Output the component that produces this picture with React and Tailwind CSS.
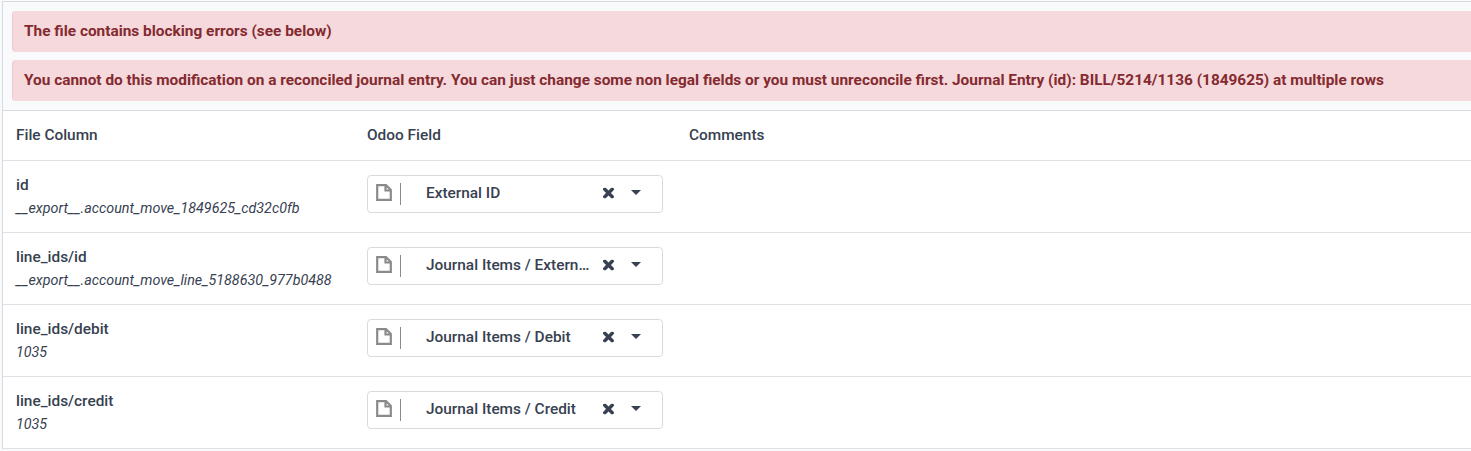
import React from "react";

const rows = [
  { name: "id", sample: "__export__.account_move_1849625_cd32c0fb", field: "External ID" },
  { name: "line_ids/id", sample: "__export__.account_move_line_5188630_977b0488", field: "Journal Items / External ID" },
  { name: "line_ids/debit", sample: "1035", field: "Journal Items / Debit" },
  { name: "line_ids/credit", sample: "1035", field: "Journal Items / Credit" },
];

function FileIcon() {
  return (
    <svg width="16" height="17" viewBox="0 0 16 17" className="shrink-0 -translate-y-[1px]">
      <path d="M1.2 1.2H10L14.8 6V15.8H1.2Z M9.5 1.2V6.5H14.8" fill="none" stroke="#8a8a8a" strokeWidth="2.2" />
    </svg>
  );
}

function Cross() {
  return (
    <svg width="11" height="11" viewBox="0 0 11 11" className="shrink-0">
      <path d="M1.8 1.8L9.2 9.2M9.2 1.8L1.8 9.2" stroke="#374151" strokeWidth="3.4" strokeLinecap="round" />
    </svg>
  );
}

function Caret() {
  return (
    <svg width="10" height="5" viewBox="0 0 10 5" className="shrink-0 -translate-y-[1px]">
      <path d="M0 0H10L5 5Z" fill="#374151" />
    </svg>
  );
}

function Row({ row }) {
  return (
    <div className="flex h-[72px] border-b border-[#dee2e6] bg-white">
      <div className="w-[364px] shrink-0 pl-[13px] pt-[13px]">
        <div className="text-[15.4px] leading-[23px] font-medium text-[#374151]">{row.name}</div>
        <div className="text-[14.3px] leading-[23px] italic text-[#374151]">{row.sample}</div>
      </div>
      <div className="pt-[13.5px]">
        <div className="flex items-center w-[296px] h-[38.5px] border border-[#d8dadd] rounded-[4px] bg-white">
          <div className="ml-[8px] mr-[8px]"><FileIcon /></div>
          <div className="w-px h-[22px] bg-[#8a8a8a]"></div>
          <div className="ml-[25px] w-[165px] shrink-0 truncate text-[15.4px] font-medium text-[#374151] -translate-y-[0.5px]">{row.field}</div>
          <div className="ml-[12px] mr-[17px] -translate-y-[0.5px]"><Cross /></div>
          <Caret />
        </div>
      </div>
    </div>
  );
}

export default function App() {
  return (
    <div className="w-[1471px] h-[451px] overflow-hidden bg-[#f9fafb] font-['Roboto',sans-serif]">
      <div className="ml-[2px] mt-px border-l border-t border-[#d8dadd]">
        <div className="bg-[#f9fafb] pl-[9px] pt-[9px] pb-[9px] border-b border-[#d8dadd] flex flex-col gap-[8px]">
          <div className="h-[41px] flex items-center pl-[11px] rounded-l-[4px] border-l border-[#f0c8cc] bg-[#f5d9dc] text-[15.4px] font-bold text-[#842a30]">
            The file contains blocking errors (see below)
          </div>
          <div className="h-[41px] flex items-center pl-[11px] rounded-l-[4px] border-l border-[#f0c8cc] bg-[#f5d9dc] text-[15.4px] font-bold text-[#842a30] whitespace-nowrap">
            You cannot do this modification on a reconciled journal entry. You can just change some non legal fields or you must unreconcile first. Journal Entry (id): BILL/5214/1136 (1849625) at multiple rows
          </div>
        </div>
        <div className="flex h-[50px] items-center border-b border-[#dee2e6] bg-white text-[15.4px] font-medium text-[#374151]">
          <div className="w-[364px] pl-[13px]">File Column</div>
          <div className="w-[322px]">Odoo Field</div>
          <div>Comments</div>
        </div>
        {rows.map((r) => (
          <Row key={r.name} row={r} />
        ))}
      </div>
    </div>
  );
}
